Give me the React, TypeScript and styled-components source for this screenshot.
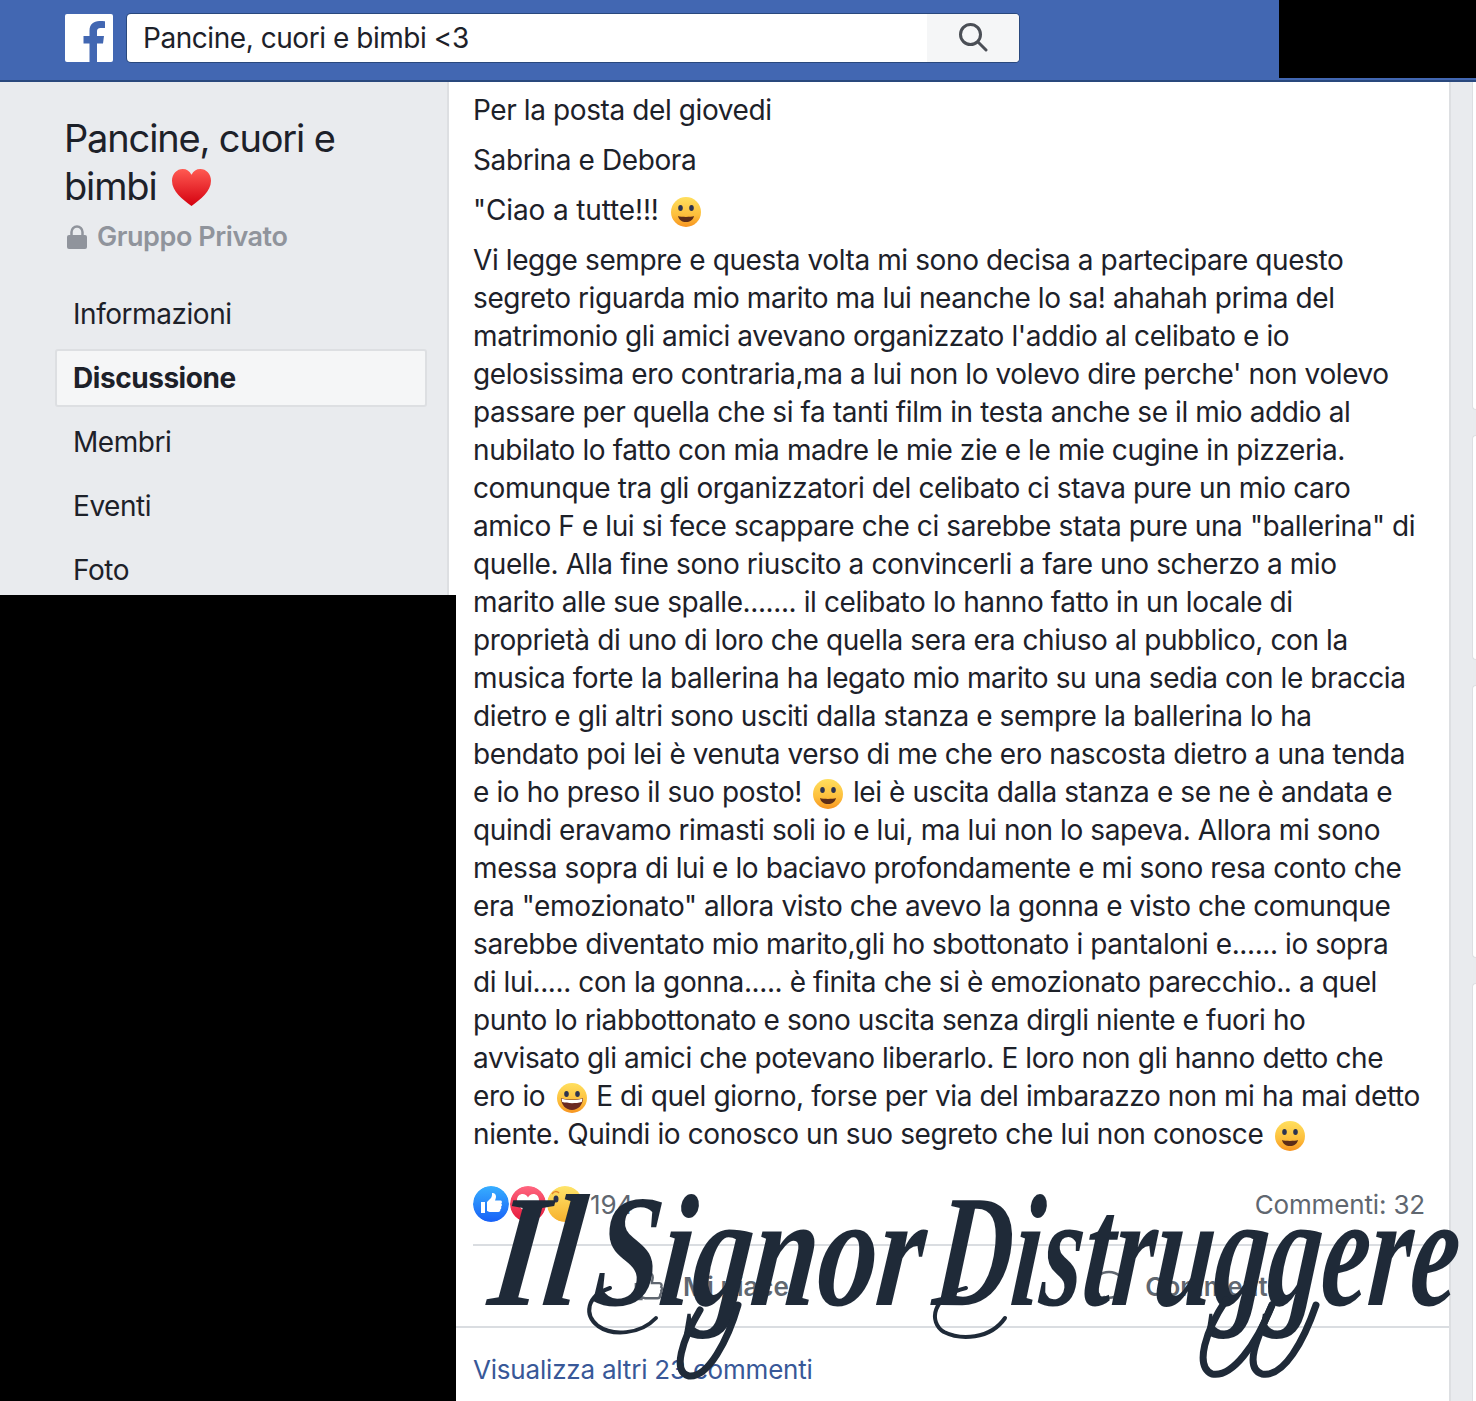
import React from "react";
import styled, { createGlobalStyle } from "styled-components";

const Global = createGlobalStyle`
  html, body { margin: 0; padding: 0; background: #fff; }
  body { font-family: Inter, "Noto Sans", sans-serif; color: #1d2129; }
`;
const Page = styled.div`
  position: relative;
  width: 1476px;
  height: 1401px;
  overflow: hidden;
  display: flex;
  flex-direction: column;
  background: #e9ebee;
`;
const TopBar = styled.header`
  height: 82px;
  box-sizing: border-box;
  flex: none;
  background: #4267b2;
  border-bottom: 2px solid #29487d;
  display: flex;
  align-items: flex-start;
  padding: 14px 0 0 65px;
  gap: 14px;
`;
const FbLogo = styled.div`
  width: 48px;
  height: 48px;
  background: #fff;
  border-radius: 2px;
  overflow: hidden;
`;
const Search = styled.div`
  width: 892px;
  height: 48px;
  background: #fff;
  border-radius: 4px;
  box-shadow: 0 0 0 1px #29487d;
  display: flex;
  overflow: hidden;
`;
const SearchText = styled.div`
  flex: 1;
  font-size: 28px;
  line-height: 48px;
  padding-left: 16px;
  letter-spacing: -0.45px;
  color: #1d2129;
`;
const SearchButton = styled.div`
  width: 92px;
  background: #f5f6f7;
  display: flex;
  align-items: center;
  justify-content: center;
  padding-bottom: 3px;
  box-sizing: border-box;
`;
const Body = styled.div`
  flex: 1;
  display: flex;
  min-height: 0;
`;
const Side = styled.aside`
  width: 447px;
  flex: none;
  padding-top: 32px;
`;
const GroupName = styled.h1`
  margin: 0 0 0 64px;
  width: 340px;
  font-size: 38px;
  line-height: 48px;
  font-weight: 400;
  letter-spacing: -1.15px;
  color: #1d2129;
`;
const Heart = styled.svg`
  width: 41px;
  height: 39px;
  vertical-align: -7px;
  margin-left: 5px;
`;
const Privacy = styled.div`
  margin: 7px 0 0 67px;
  display: flex;
  align-items: center;
  gap: 10px;
  font-size: 27px;
  line-height: 40px;
  font-weight: 600;
  letter-spacing: -0.45px;
  color: #90949c;
`;
const Nav = styled.nav`
  margin: 28px 0 0 55px;
  width: 372px;
  display: flex;
  flex-direction: column;
  gap: 6px;
`;
const NavItem = styled.div<{ $active?: boolean }>`
  height: 58px;
  box-sizing: border-box;
  padding-left: 16px;
  font-size: 28px;
  line-height: 55px;
  letter-spacing: -0.45px;
  border-radius: 3px;
  border: 2px solid ${(p) => (p.$active ? "#dddfe2" : "transparent")};
  background: ${(p) => (p.$active ? "#f5f6f7" : "transparent")};
  font-weight: ${(p) => (p.$active ? 700 : 400)};
  color: #1d2129;
`;
const Post = styled.main`
  width: 1004px;
  flex: none;
  box-sizing: border-box;
  background: #fff;
  border-left: 2px solid #dddfe2;
  border-right: 2px solid #dddfe2;
  position: relative;
`;
const PostText = styled.div`
  padding: 9px 24px 0 24px;
  font-size: 28px;
  line-height: 38px;
  letter-spacing: -0.4px;
  color: #1d2129;
`;
const Para = styled.p<{ $spacing?: string }>`
  margin: 0 0 12px;
  letter-spacing: ${(p) => p.$spacing ?? "inherit"};
`;
const Line = styled.span`
  display: block;
  white-space: nowrap;
`;
const Emoji = styled.svg`
  width: 32px;
  height: 32px;
  vertical-align: -8px;
  margin: 0 1px 0 3px;
`;
const Stats = styled.div`
  margin: 27px 24px 0 24px;
  height: 48px;
  display: flex;
  align-items: center;
`;
const Reactions = styled.div`
  display: flex;
  margin-right: 6px;
`;
const Reaction = styled.svg`
  width: 36px;
  height: 36px;
  margin-right: 1px;
  border-radius: 50%;
`;
const Count = styled.span<{ $push?: boolean }>`
  font-size: 26px;
  letter-spacing: -0.15px;
  color: #606770;
  margin-left: ${(p) => (p.$push ? "auto" : "0")};
`;
const Actions = styled.div`
  margin: 16px 24px 0 24px;
  border-top: 2px solid #dadde1;
  height: 80px;
  display: flex;
`;
const ActionBtn = styled.div`
  width: 50%;
  display: flex;
  align-items: center;
  justify-content: center;
  gap: 18px;
  font-size: 26px;
  font-weight: 600;
  color: #606770;
`;
const More = styled.div`
  border-top: 2px solid #dadde1;
  padding: 26px 0 0 24px;
  font-size: 26px;
  letter-spacing: -0.2px;
  color: #385898;
`;
const RightGutter = styled.div`
  flex: 1;
  background: #e9ebee;
  display: flex;
  flex-direction: column;
  align-items: flex-end;
  gap: 25px;
`;
const SideCard = styled.div<{ $h: number; $first?: boolean; $last?: boolean }>`
  width: 4px;
  box-sizing: border-box;
  height: ${(p) => p.$h}px;
  flex: ${(p) => (p.$last ? 1 : "none")};
  background: #fff;
  border-left: 1px solid #dddfe2;
  border-top: ${(p) => (p.$first ? "none" : "1px solid #dddfe2")};
  border-bottom: ${(p) => (p.$last ? "none" : "1px solid #dddfe2")};
  border-radius: ${(p) => (p.$first ? "0 0 0 4px" : p.$last ? "4px 0 0 0" : "4px 0 0 4px")};
`;
const BlackSide = styled.div`
  position: absolute;
  left: 0;
  top: 595px;
  width: 456px;
  height: 806px;
  background: #000;
`;
const BlackCorner = styled.div`
  position: absolute;
  left: 1279px;
  top: 0;
  width: 197px;
  height: 78px;
  background: #000;
`;
const Watermark = styled.div`
  position: absolute;
  top: 1171px;
  white-space: nowrap;
  font-family: "Liberation Serif", serif;
  font-style: italic;
  font-weight: 700;
  font-size: 160px;
  color: #1f2a38;
  line-height: 1;
  transform-origin: left center;
`;
const WmIl = styled(Watermark)`
  left: 493px;
  transform: scaleX(0.85) skewX(-8deg);
`;
const WmSignor = styled(Watermark)`
  left: 596px;
  transform: scaleX(0.74) skewX(-8deg);
`;
const WmDis = styled(Watermark)`
  left: 936px;
  transform: scaleX(0.67) skewX(-8deg);
`;
const Swashes = styled.svg`
  position: absolute;
  left: 570px;
  top: 1270px;
  width: 760px;
  height: 120px;
`;

const Smile = ({ grin }: { grin?: boolean }) => (
  <Emoji viewBox="0 0 32 32">
    <defs>
      <linearGradient id="emojiFace" x1="0" y1="0" x2="0" y2="1">
        <stop offset="0" stopColor="#ffdf5e" />
        <stop offset="0.6" stopColor="#fdbf3c" />
        <stop offset="1" stopColor="#f79420" />
      </linearGradient>
    </defs>
    <circle cx="16" cy="16" r="15" fill="url(#emojiFace)" />
    <ellipse cx="10.500" cy="12" rx="2.300" ry="3" fill="#2c3350" />
    <ellipse cx="21.500" cy="12" rx="2.300" ry="3" fill="#2c3350" />
    {grin ? (
      <>
        <path d="M5 16c6 2 16 2 22 0 0 7-5 12-11 12S5 23 5 16z" fill="#6b2a22" />
        <path d="M5.500 16.500c6 2 15 2 21 0l-.7 3.500c-6 1.600-13.600 1.600-19.600 0z" fill="#fff" />
      </>
    ) : (
      <path d="M8 20c3 1.200 13 1.200 16 0-1 4-4 6-8 6s-7-2-8-6z" fill="#5d2d18" />
    )}
  </Emoji>
);

const lines: (string | { t: string; e: "s" | "g"; a?: string })[] = [
  "Vi legge sempre e questa volta mi sono decisa a partecipare questo",
  "segreto riguarda mio marito ma lui neanche lo sa! ahahah prima del",
  "matrimonio gli amici avevano organizzato l'addio al celibato e io",
  "gelosissima ero contraria,ma a lui non lo volevo dire perche' non volevo",
  "passare per quella che si fa tanti film in testa anche se il mio addio al",
  "nubilato lo fatto con mia madre le mie zie e le mie cugine in pizzeria.",
  "comunque tra gli organizzatori del celibato ci stava pure un mio caro",
  'amico F e lui si fece scappare che ci sarebbe stata pure una "ballerina" di',
  "quelle. Alla fine sono riuscito a convincerli a fare uno scherzo a mio",
  "marito alle sue spalle....... il celibato lo hanno fatto in un locale di",
  "proprietà di uno di loro che quella sera era chiuso al pubblico, con la",
  "musica forte la ballerina ha legato mio marito su una sedia con le braccia",
  "dietro e gli altri sono usciti dalla stanza e sempre la ballerina lo ha",
  "bendato poi lei è venuta verso di me che ero nascosta dietro a una tenda",
  { t: "e io ho preso il suo posto! ", e: "s", a: " lei è uscita dalla stanza e se ne è andata e" },
  "quindi eravamo rimasti soli io e lui, ma lui non lo sapeva. Allora mi sono",
  "messa sopra di lui e lo baciavo profondamente e mi sono resa conto che",
  'era "emozionato" allora visto che avevo la gonna e visto che comunque',
  "sarebbe diventato mio marito,gli ho sbottonato i pantaloni e...... io sopra",
  "di lui..... con la gonna..... è finita che si è emozionato parecchio.. a quel",
  "punto lo riabbottonato e sono uscita senza dirgli niente e fuori ho",
  "avvisato gli amici che potevano liberarlo. E loro non gli hanno detto che",
  { t: "ero io ", e: "g", a: " E di quel giorno, forse per via del imbarazzo non mi ha mai detto" },
  { t: "niente. Quindi io conosco un suo segreto che lui non conosce ", e: "s" },
];

export default function App() {
  return (
    <Page>
      <Global />
      <TopBar>
        <FbLogo>
          <svg width="48" height="48" viewBox="0 0 48 48">
            <path d="M33 48V29.500h6l1-7.500h-7v-4.500c0-2.200.8-3.600 3.700-3.600H41V7.300C40.200 7.200 38 7 35.300 7c-5.600 0-9.800 3.400-9.800 9.700V22h-6v7.500h6V48z" fill="#4267b2" transform="translate(-1 0)" />
          </svg>
        </FbLogo>
        <Search>
          <SearchText>Pancine, cuori e bimbi &lt;3</SearchText>
          <SearchButton>
            <svg width="30" height="30" viewBox="0 0 30 30" fill="none" stroke="#4b4f56" strokeWidth="3">
              <circle cx="12.500" cy="12.500" r="10" />
              <path d="M20 20l8 8" strokeLinecap="round" />
            </svg>
          </SearchButton>
        </Search>
      </TopBar>
      <Body>
        <Side>
          <GroupName>
            Pancine, cuori e bimbi{" "}
            <Heart viewBox="0 0 42 40">
              <defs>
                <linearGradient id="hg" x1="0" y1="0" x2="0" y2="1">
                  <stop offset="0" stopColor="#ff5a52" />
                  <stop offset="1" stopColor="#d4000f" />
                </linearGradient>
              </defs>
              <path d="M21 39C12 32 1 24 1 13 1 6 6 1 12 1c4 0 7 2 9 6 2-4 5-6 9-6 6 0 11 5 11 12 0 11-11 19-20 26z" fill="url(#hg)" />
            </Heart>
          </GroupName>
          <Privacy>
            <svg width="20" height="24" viewBox="0 0 20 24">
              <path d="M2 10h16a2 2 0 0 1 2 2v10a2 2 0 0 1-2 2H2a2 2 0 0 1-2-2V12a2 2 0 0 1 2-2z" fill="#90949c" />
              <path d="M4.500 11V7a5.500 5.500 0 0 1 11 0v4" fill="none" stroke="#90949c" strokeWidth="2.500" />
            </svg>
            Gruppo Privato
          </Privacy>
          <Nav>
            <NavItem>Informazioni</NavItem>
            <NavItem $active>Discussione</NavItem>
            <NavItem>Membri</NavItem>
            <NavItem>Eventi</NavItem>
            <NavItem>Foto</NavItem>
          </Nav>
        </Side>
        <Post>
          <PostText>
            <Para>Per la posta del giovedi</Para>
            <Para>Sabrina e Debora</Para>
            <Para $spacing="-0.13px">
              "Ciao a tutte!!! <Smile />
            </Para>
            <Para>
              {lines.map((l, i) =>
                typeof l === "string" ? (
                  <Line key={i}>{l}</Line>
                ) : (
                  <Line key={i}>
                    {l.t}
                    <Smile grin={l.e === "g"} />
                    {l.a}
                  </Line>
                )
              )}
            </Para>
          </PostText>
          <Stats>
            <Reactions>
              <Reaction viewBox="0 0 36 36">
                <defs>
                  <linearGradient id="lk" x1="0" y1="0" x2="0" y2="1">
                    <stop offset="0" stopColor="#37aeff" />
                    <stop offset="1" stopColor="#1861f7" />
                  </linearGradient>
                  <linearGradient id="lv" x1="0" y1="0" x2="0" y2="1">
                    <stop offset="0" stopColor="#ff6680" />
                    <stop offset="1" stopColor="#e61739" />
                  </linearGradient>
                  <linearGradient id="wo" x1="0" y1="0" x2="0" y2="1">
                    <stop offset="0" stopColor="#fee46a" />
                    <stop offset="1" stopColor="#f7b12d" />
                  </linearGradient>
                </defs>
                <circle cx="18" cy="18" r="18" fill="url(#lk)" />
                <path d="M8 16h4v11H8zM14 16l4-4c1-1.500 1-3 1-5 2-.5 4 1 4 3.500 0 1.500-.5 2.500-1 4h5.500c1.500 0 2 2 .8 3 1 1 .8 2.500-.3 3.200.6 1 .3 2.300-.7 2.800.3 1.500-.7 2.500-2 2.500H18c-1.500 0-3-.5-4-1z" fill="#fff" />
              </Reaction>
              <Reaction viewBox="0 0 36 36">
                <circle cx="18" cy="18" r="18" fill="url(#lv)" />
                <path d="M18 28C13 24 7 20 7 14c0-4 3-6 5.500-6 2.500 0 4.500 1.500 5.500 3.500C19 9.500 21 8 23.500 8 26 8 29 10 29 14c0 6-6 10-11 14z" fill="#fff" />
              </Reaction>
              <Reaction viewBox="0 0 36 36">
                <circle cx="18" cy="18" r="18" fill="url(#wo)" />
                <path d="M5 8c2-3 5-3 7-1" fill="none" stroke="#e8862a" strokeWidth="1.500" />
                <ellipse cx="9" cy="13" rx="2.500" ry="3.500" fill="#2c3350" />
              </Reaction>
            </Reactions>
            <Count>194</Count>
            <Count $push>Commenti: 32</Count>
          </Stats>
          <Actions>
            <ActionBtn>
              <svg width="32" height="34" viewBox="0 0 34 34" fill="none" stroke="#606770" strokeWidth="2.500">
                <path d="M3 15h6v16H3zM9 16l6-6c1-2 1-4 1-7 3 0 5 2 5 5 0 2-1 4-1 6h8c2 0 3 2 2 4 1 1 1 3 0 4 .5 1.500 0 3-1 4 0 2-1 4-3 4H14c-2 0-3-1-5-1" />
              </svg>
              Mi piace
            </ActionBtn>
            <ActionBtn>
              <svg width="36" height="34" viewBox="0 0 36 34" fill="none" stroke="#606770" strokeWidth="2.500">
                <path d="M18 3C9.700 3 3 8.800 3 16c0 3.800 1.900 7.200 4.900 9.600L7 31l6-3c1.600.5 3.300.8 5 .8 8.300 0 15-5.700 15-12.800S26.300 3 18 3z" />
              </svg>
              Commenta
            </ActionBtn>
          </Actions>
          <More>Visualizza altri 23 commenti</More>
        </Post>
        <RightGutter>
          <SideCard $first $h={328} />
          <SideCard $h={225} />
          <SideCard $h={273} />
          <SideCard $last $h={100} />
        </RightGutter>
      </Body>
      <BlackSide />
      <BlackCorner />
      <WmIl>Il</WmIl>
      <WmSignor>Signor</WmSignor>
      <WmDis>Distruggere</WmDis>
      <Swashes viewBox="570 1270 760 120" fill="none" stroke="#1f2a38" strokeLinecap="round">
        <path d="M656 1318C640 1335 612 1336 598 1326C584 1315 586 1296 610 1288" strokeWidth="4" />
        <path d="M1005 1318C990 1340 960 1340 944 1332C928 1322 932 1296 966 1288" strokeWidth="4" />
        <path d="M700 1310C682 1340 672 1372 689 1376C708 1378 728 1340 738 1305" strokeWidth="7" />
        <path d="M1226 1300C1206 1330 1194 1366 1212 1374C1232 1378 1256 1345 1272 1305" strokeWidth="7" />
        <path d="M1272 1305C1256 1340 1244 1368 1262 1374C1284 1378 1304 1340 1316 1305" strokeWidth="7" />
      </Swashes>
    </Page>
  );
}
